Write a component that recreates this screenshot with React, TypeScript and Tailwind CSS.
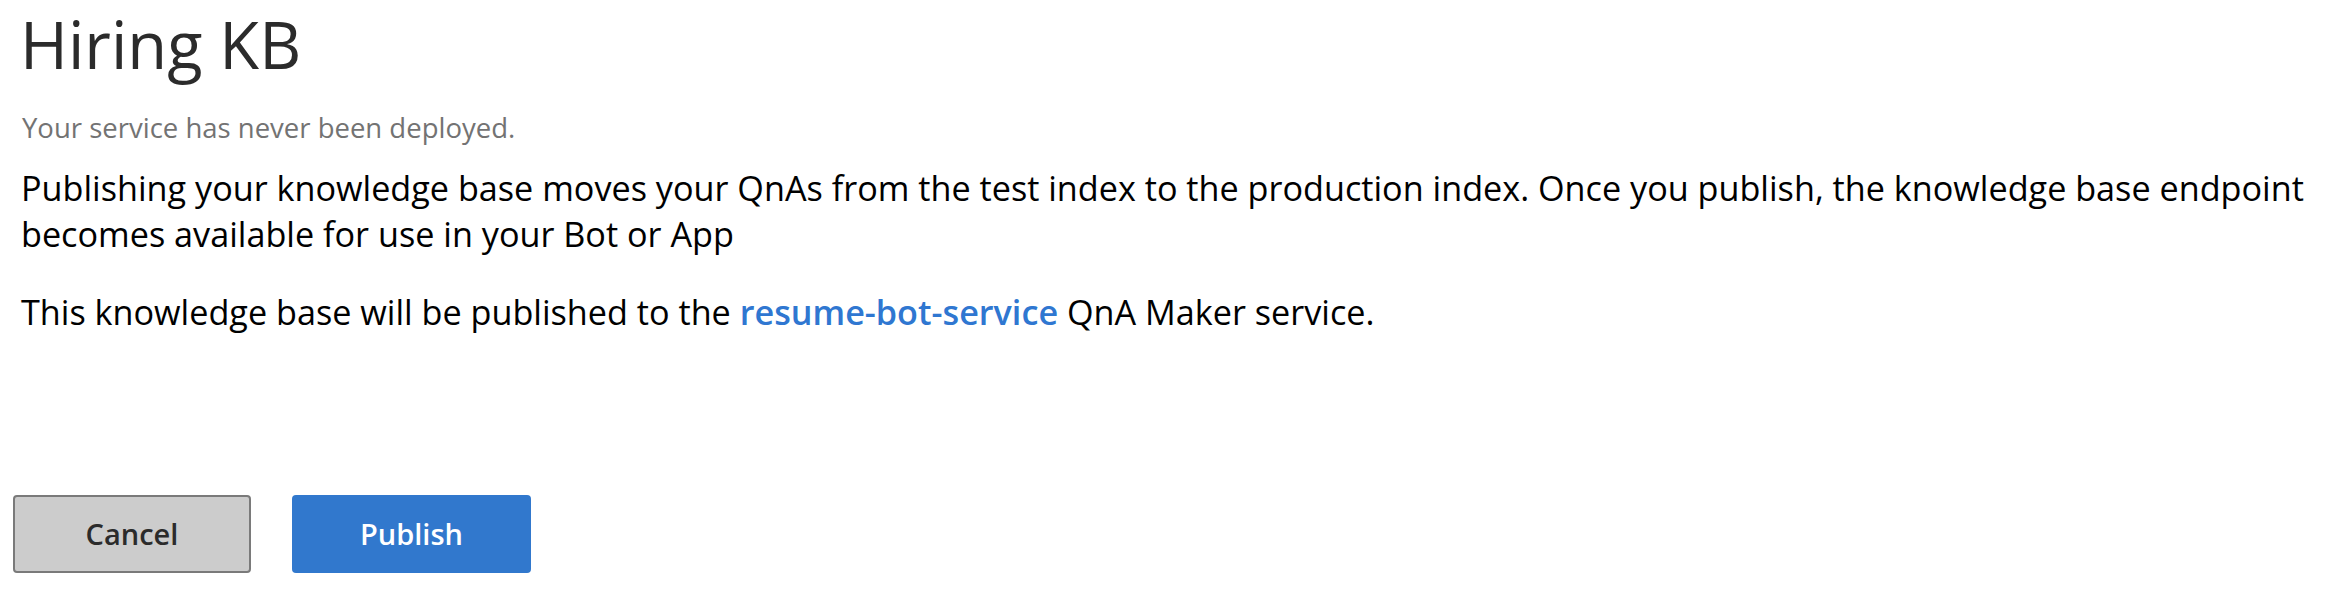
export default function App() {
  return (
    <div
      className="min-h-screen bg-white px-[13px] pt-[6px]"
      style={{ fontFamily: '"Open Sans", "Noto Sans", sans-serif' }}
    >
      {/* Header */}
      <div className="pl-[7px]">
        <h1 className="text-[65px] leading-[76px] font-normal text-[#2b2b2b]">Hiring KB</h1>
        <p className="mt-[26px] text-[27.5px] leading-[40px] text-[#737373] pl-[2px]">
          Your service has never been deployed.
        </p>
      </div>

      {/* Body */}
      <div className="pl-[8px] text-black text-[34.2px] leading-[46px]">
        <p className="mt-[17px]">
          Publishing your knowledge base moves your QnAs from the test index to the production index. Once you publish, the knowledge base endpoint becomes available for use in your Bot or App
        </p>
        <p className="mt-[32px]">
          This knowledge base will be published to the{' '}
          <span className="font-semibold text-[#2f77d1]">resume-bot-service</span> QnA Maker service.
        </p>
      </div>

      {/* Actions */}
      <div className="mt-[160px] flex gap-[41px]">
        <button className="w-[238px] h-[78px] rounded-[4px] border-2 border-[#7a7a7a] bg-[#cccccc] text-[29px] font-semibold text-[#2b2b2b]">
          Cancel
        </button>
        <button className="w-[239px] h-[78px] rounded-[4px] bg-[#3178cd] text-[29px] font-semibold text-white">
          Publish
        </button>
      </div>
    </div>
  );
}
